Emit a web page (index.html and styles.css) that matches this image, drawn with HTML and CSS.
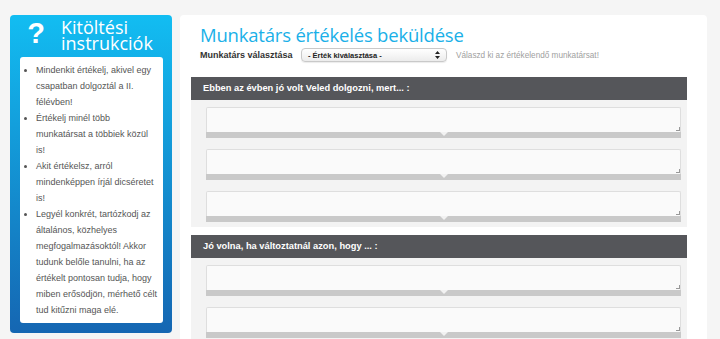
FILE: index.html
```html
<!DOCTYPE html>
<html lang="hu">

<head>
    <meta charset="UTF-8">
    <meta name="viewport" content="width=device-width, initial-scale=1.0">
    <title>Munkatárs értékelés</title>
    <link rel="stylesheet" href="styles.css">
</head>

<body>
    <div class="page">
        <aside class="sidebar">
            <div class="sidebar-head">
                <span class="qmark">?</span>
                <h2>Kitöltési<br>instrukciók</h2>
            </div>
            <div class="help-box">
                <ul>
                    <li>Mindenkit értékelj, akivel egy csapatban dolgoztál a II. félévben!</li>
                    <li>Értékelj minél több munkatársat a többiek közül is!</li>
                    <li>Akit értékelsz, arról mindenképpen írjál dicséretet is!</li>
                    <li>Legyél konkrét, tartózkodj az általános, közhelyes megfogalmazásoktól! Akkor tudunk belőle tanulni, ha az értékelt pontosan tudja, hogy miben erősödjön, mérhető célt tud kitűzni maga elé.</li>
                </ul>
            </div>
        </aside>

        <main class="form-panel">
            <h1>Munkatárs értékelés beküldése</h1>
            <div class="pick-row">
                <label>Munkatárs választása</label>
                <div class="select">
                    <span>- Érték kiválasztása -</span>
                    <svg width="5" height="8" viewBox="0 0 5 8"><path d="M2.5 0 L5 3 H0 Z M2.5 8 L5 5 H0 Z" fill="#222"/></svg>
                </div>
                <span class="hint">Válaszd ki az értékelendő munkatársat!</span>
            </div>

            <section class="question">
                <div class="q-head">Ebben az évben jó volt Veled dolgozni, mert... :</div>
                <div class="q-body">
                    <div class="answer"><div class="area"></div><div class="grip"></div></div>
                    <div class="answer"><div class="area"></div><div class="grip"></div></div>
                    <div class="answer"><div class="area"></div><div class="grip"></div></div>
                </div>
            </section>

            <section class="question">
                <div class="q-head">Jó volna, ha változtatnál azon, hogy ... :</div>
                <div class="q-body">
                    <div class="answer"><div class="area"></div><div class="grip"></div></div>
                    <div class="answer"><div class="area"></div><div class="grip"></div></div>
                    <div class="answer"><div class="area"></div><div class="grip"></div></div>
                </div>
            </section>
        </main>
    </div>
</body>

</html>
```

FILE: styles.css
```css
body {
    margin: 0;
    background-color: #f5f5f5;
    font-family: 'Liberation Sans', Arial, sans-serif;
    overflow: hidden;
}

.page {
    display: flex;
    align-items: flex-start;
    gap: 8px;
    padding: 15px 13px 0 10px;
}

/* left column */
.sidebar {
    width: 162px;
    flex-shrink: 0;
    box-sizing: border-box;
    padding: 0 9px 10px 10px;
    border-radius: 4px;
    background: linear-gradient(#12bdf2, #1566b2);
}

.sidebar-head {
    display: flex;
    align-items: flex-start;
    height: 42px;
}

.qmark {
    width: 28px;
    margin-left: 2px;
    font-size: 29px;
    font-weight: 700;
    line-height: 36px;
    color: #fff;
    text-align: center;
}

.sidebar-head h2 {
    margin: 4px 0 0 11px;
    font-family: 'Open Sans', sans-serif;
    font-weight: 400;
    font-size: 18px;
    line-height: 16px;
    color: #fff;
}

.help-box {
    height: 266px;
    box-sizing: border-box;
    padding: 5px 4px 0 0;
    background-color: #fff;
    border-radius: 3px;
}

.help-box ul {
    margin: 0;
    padding-left: 16px;
}

.help-box li {
    font-size: 9px;
    line-height: 16px;
    color: #555;
}

/* right column */
.form-panel {
    flex: 1;
    height: 340px;
    box-sizing: border-box;
    padding: 8px 20px 0 11px;
    background-color: #fff;
    border-radius: 4px;
}

.form-panel h1 {
    margin: 0 0 0 9px;
    font-family: 'Open Sans', sans-serif;
    font-weight: 400;
    font-size: 18.5px;
    letter-spacing: -0.2px;
    line-height: 24px;
    color: #1ab0e8;
}

.pick-row {
    display: flex;
    align-items: center;
    height: 14px;
    margin: 1px 0 0 9px;
}

.pick-row label {
    width: 101px;
    font-size: 9px;
    font-weight: 700;
    color: #333;
}

.select {
    display: flex;
    align-items: center;
    justify-content: space-between;
    width: 146px;
    height: 14px;
    box-sizing: border-box;
    padding: 0 6px 0 6px;
    border: 1px solid #c9c9c9;
    border-radius: 4px;
    background: linear-gradient(#fff, #ececec);
    box-shadow: 0 1px 1px rgba(0, 0, 0, 0.08);
    font-size: 7.5px;
    font-weight: 700;
    color: #222;
}

.hint {
    margin-left: 9px;
    font-size: 8.2px;
    color: #a0a0a0;
}

.question {
    margin-top: 15px;
}

.question + .question {
    margin-top: 8px;
}

.q-head {
    height: 23px;
    box-sizing: border-box;
    padding-left: 12px;
    background-color: #55565a;
    color: #fff;
    font-size: 9.3px;
    font-weight: 700;
    line-height: 23px;
}

.q-body {
    display: flex;
    flex-direction: column;
    gap: 11px;
    padding: 7px 6px 5px 15px;
    background-color: #f3f3f3;
}

.answer {
    position: relative;
}

.area {
    height: 25px;
    box-sizing: border-box;
    border: 1px solid #dedede;
    border-bottom: none;
    background-color: #fafafa;
    border-radius: 2px 2px 0 0;
}

.grip {
    position: relative;
    height: 6px;
    background-color: #c9c9c9;
}

.grip::before {
    content: "";
    position: absolute;
    left: 50%;
    top: 0;
    margin-left: -4px;
    border-left: 4px solid transparent;
    border-right: 4px solid transparent;
    border-top: 4px solid #f2f2f2;
}

/* resize mark in the corner */
.area::after {
    content: "";
    position: absolute;
    right: 1px;
    top: 20px;
    width: 3px;
    height: 3px;
    border-right: 1px solid #999;
    border-bottom: 1px solid #999;
}
```
